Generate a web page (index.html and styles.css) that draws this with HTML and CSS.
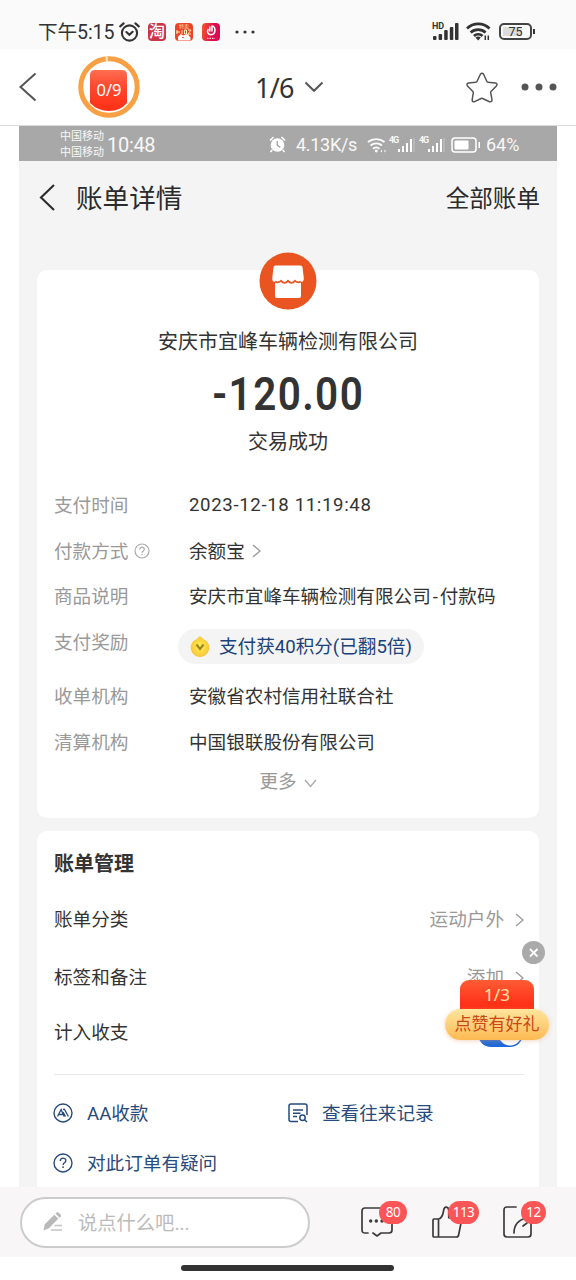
FILE: index.html
```html
<!DOCTYPE html>
<html lang="zh-CN">
<head>
<meta charset="utf-8">
<title>账单详情</title>
<link rel="stylesheet" href="styles.css">
</head>
<body>
<div class="phone">
  <header class="status">
    <span class="status-time">下午5:15</span>
    <svg class="status-alarm" width="21" height="20" viewBox="0 0 21 20" fill="none" stroke="#333" stroke-width="2.1" stroke-linecap="round"><circle cx="10.5" cy="11" r="7.6"/><path d="M7.4 10l3 2.8 3.2-3M1.2 4.4l3.4-3M19.8 4.400l-3.400-3"/></svg>
    <span class="app app-tao">淘</span>
    <span class="app app-sale"><span class="app-tiny">特卖</span>
      <svg width="18" height="12" viewBox="0 0 18 12"><path d="M2 1v4M1 3h4M7 1v4M9.500 1h2v4h-2zM13 1h3l-3 4h3" stroke="#ffe9b0" fill="none"/><path d="M3 11.500V8l2.500-3 3 1.500 4-1.500 3 3.500v3z" fill="#fff"/><circle cx="8" cy="8.500" r=".8" fill="#a43"/></svg></span>
    <span class="app app-live"><svg width="18" height="18" viewBox="0 0 18 18" fill="none" stroke="#fff" stroke-width="1.500" stroke-linecap="round"><path d="M6 6.500c-1.200 3 .2 5.200 3 5.200s4.300-2 3.900-5.500c-.1-1.500-.9-2.500-1.900-3M7.800 4v4M10 3v5"/><path d="M5 15.300h8" stroke-width="1" stroke-dasharray="1.500 1" stroke-linecap="butt"/></svg></span>
    <svg class="status-dots" width="20" height="4" viewBox="0 0 20 4" fill="#333"><circle cx="2" cy="2" r="1.600"/><circle cx="10" cy="2" r="1.600"/><circle cx="18" cy="2" r="1.600"/></svg>
    <span class="signal"><span class="signal-hd">HD</span>
      <svg width="26" height="17" viewBox="0 0 26 17" fill="#333"><rect y="13" width="3.500" height="4" rx="1"/><rect x="5.600" y="11" width="3.500" height="6" rx="1"/><rect x="11.200" y="7" width="3.500" height="10" rx="1"/><rect x="16.800" y="4" width="3.500" height="13" rx="1"/><rect x="22" y="0" width="3.500" height="17" rx="1"/></svg></span>
    <svg class="status-wifi" width="25" height="19" viewBox="0 0 25 19" fill="none" stroke="#333" stroke-width="2.700"><path d="M1 6.500a16 16 0 0 1 22.500 0M4.600 10.500a11 11 0 0 1 15 0M8 14a6 6 0 0 1 8.500 0"/><path d="M9.500 15.500l2.700 3 2.600-3q-2.600-2-5.300 0z" fill="#333" stroke="none"/><path d="M19.300 13.500v4.500M22.300 13.500v4.500" stroke-width="1.500"/></svg>
    <span class="battery"><span class="battery-level">75</span></span>
  </header>

  <nav class="nav">
    <svg class="nav-back" width="18" height="30" viewBox="0 0 18 30" fill="none" stroke="#555" stroke-width="2"><path d="M16.500 1.500L1.500 15l15 13.500"/></svg>
    <div class="ring"><svg width="62" height="62" viewBox="0 0 62 62"><defs><linearGradient id="redFade" x2="0" y2="1"><stop stop-color="#ff6e52"/><stop offset=".4" stop-color="#ff492f"/><stop offset="1" stop-color="#fe2f15"/></linearGradient></defs><circle cx="31" cy="31" r="28.200" fill="none" stroke="#f8a043" stroke-width="5"/><path d="M28.500.5l.4 5" stroke="#fbe6ce" stroke-width="2"/><path d="M12 19q0-5 5-5h27q5 0 5 5v28q-7 8-18 8t-19-8z" fill="url(#redFade)"/></svg><span class="ring-count">0/9</span></div>
    <div class="nav-page">1/6<svg width="20" height="12" viewBox="0 0 20 12" fill="none" stroke="#555" stroke-width="2"><path d="M1.500 1.500l8.500 8.300 8.500-8.300"/></svg></div>
    <svg class="nav-star" width="32" height="31" viewBox="0 0 32 31" fill="none" stroke="#555" stroke-width="1.500" stroke-linejoin="round"><path d="M14.400 2.300Q16 .1 17.600 2.300l3.300 7.200q.3.700 1.100.8l7.300.8q2.700.5 1.100 2.800l-5.400 5.600q-.4.500-.3 1.200l1.300 7q.1 2.600-2.400 2l-7-3.200q-.7-.3-1.400 0l-6.600 3.200q-2.600.4-2.400-2l1.100-7q.1-.7-.4-1.200L1.500 13.900Q0 11.700 2.600 11.100l7.300-.8q.8-.1 1.100-.8z"/></svg>
    <svg class="nav-more" width="36" height="8" viewBox="0 0 36 8" fill="#555"><circle cx="4" cy="4" r="3.500"/><circle cx="18" cy="4" r="3.500"/><circle cx="32" cy="4" r="3.500"/></svg>
  </nav>

  <main class="shot">
    <div class="inner-status">
      <div class="carriers"><span>中国移动</span><span>中国移动</span></div>
      <span class="inner-time">10:48</span>
      <svg class="inner-alarm" width="17" height="17" viewBox="0 0 17 17"><circle cx="8.500" cy="9" r="6.800" fill="#fff"/><path d="M1 4.500L4.500 1M16 4.500L12.500 1M3.200 14L1.500 16M13.800 14l1.700 2" stroke="#fff" stroke-width="1.600"/><path d="M8.300 5v4.400l3 2" fill="none" stroke="#a8a8a8" stroke-width="1.400"/></svg>
      <span class="speed">4.13K/s</span>
      <svg class="inner-wifi" width="20" height="16" viewBox="0 0 20 16" fill="none" stroke="#fff" stroke-width="1.800"><path d="M1 5a13 13 0 0 1 16.500 0M3.500 8.500a9 9 0 0 1 11.500 0M6 11.700a5 5 0 0 1 6.500 0"/><circle cx="9.300" cy="14" r="1.400" fill="#fff" stroke="none"/><path d="M13.500 14l1.500-1.500v3zM19 14l-1.500-1.500v3z" fill="#fff" stroke="none"/></svg>
      <span class="cell"><b>4G</b><svg width="17" height="14" viewBox="0 0 17 14" fill="#fff"><rect y="11" width="2" height="3"/><rect x="4" y="8" width="2" height="6"/><rect x="8" y="5" width="2" height="9"/><rect x="12" y="1" width="2" height="13"/><rect x="15.500" y="0" width="1" height="14" opacity=".35"/></svg></span>
      <span class="cell"><b>4G</b><svg width="17" height="14" viewBox="0 0 17 14" fill="#fff"><rect y="11" width="2" height="3"/><rect x="4" y="8" width="2" height="6"/><rect x="8" y="5" width="2" height="9"/><rect x="12" y="1" width="2" height="13"/><rect x="15.500" y="0" width="1" height="14" opacity=".35"/></svg></span>
      <svg class="inner-battery" width="30" height="16" viewBox="0 0 30 16"><rect x="1" y="1" width="24" height="14" rx="3" fill="none" stroke="#fff" stroke-width="1.500"/><rect x="3.500" y="3.500" width="14" height="9" rx="1" fill="#fff"/><rect x="27.500" y="5" width="1.500" height="6" fill="#fff"/></svg>
      <span class="percent">64%</span>
    </div>

    <div class="bill-head">
      <svg width="16" height="27" viewBox="0 0 16 27" fill="none" stroke="#2b2b2b" stroke-width="2.100"><path d="M15 1L2 13.500 15 26"/></svg>
      <h1 class="bill-title">账单详情</h1>
      <span class="bill-all">全部账单</span>
    </div>

    <section class="card summary">
      <svg class="shop" width="58" height="58" viewBox="0 0 58 58"><circle cx="29" cy="29" r="28.500" fill="#e95420"/><path d="M16.500 13.500h25q1.500 0 2 1.500l1.300 11q.3 4-3 4H16.200q-3.300 0-2.900-4l1.200-11q.4-1.500 2-1.500z" fill="#fff"/><path d="M16 28h26v16q0 2-2 2H18q-2 0-2-2z" fill="#fff"/><path d="M16 29.500q3 2 6-.7 3.500 4 7 0 3.500 4 7 0 3 2.700 6 .7" fill="none" stroke="#e95420" stroke-width="1.800"/></svg>
      <p class="merchant">安庆市宜峰车辆检测有限公司</p>
      <p class="amount">-120.00</p>
      <p class="result">交易成功</p>
      <dl class="facts">
        <div class="fact"><dt>支付时间</dt><dd class="date">2023-12-18 11:19:48</dd></div>
        <div class="fact"><dt>付款方式<svg class="help" width="16" height="16" viewBox="0 0 16 16" fill="none" stroke="#aaa" stroke-width="1.200"><circle cx="8" cy="8" r="7"/><path d="M5.800 6.500c0-3.200 4.600-3 4.500-.2 0 1.700-2.200 1.600-2.200 3.400M8.100 10.700v1.500"/></svg></dt><dd>余额宝<svg class="chev" width="9" height="14" viewBox="0 0 9 14" fill="none" stroke="#999" stroke-width="1.300"><path d="M1 1l7 6-7 6"/></svg></dd></div>
        <div class="fact fact-goods"><dt>商品说明</dt><dd>安庆市宜峰车辆检测有限公司<span class="dash">-</span>付款码</dd></div>
        <div class="fact fact-reward"><dt>支付奖励</dt><dd><span class="pill"><svg width="20" height="21" viewBox="0 0 20 21"><defs><radialGradient id="coin"><stop stop-color="#fff15a"/><stop offset=".6" stop-color="#fbd83f"/><stop offset="1" stop-color="#f6c545"/></radialGradient></defs><path d="M10 .5q1 0 1.800 1l1.500 1.400a9.300 9.300 0 1 1-6.600 0L8.200 1.500Q9 .5 10 .5z" fill="url(#coin)"/><path d="M6.500 8.500l3.500 4.500 3.500-4.500" fill="none" stroke="#9c8424" stroke-width="2.100"/></svg><span class="pill-text">支付获40积分(已翻5倍)</span></span></dd></div>
        <div class="fact"><dt>收单机构</dt><dd>安徽省农村信用社联合社</dd></div>
        <div class="fact"><dt>清算机构</dt><dd>中国银联股份有限公司</dd></div>
      </dl>
      <div class="more">更多<svg width="13" height="9" viewBox="0 0 13 9" fill="none" stroke="#aaa" stroke-width="1.300"><path d="M1 1l5.500 6.500L12 1"/></svg></div>
    </section>

    <section class="card manage">
      <h2 class="manage-title">账单管理</h2>
      <div class="option"><span>账单分类</span><span class="option-value">运动户外<svg width="9" height="14" viewBox="0 0 9 14" fill="none" stroke="#999" stroke-width="1.300"><path d="M1 1l7 6-7 6"/></svg></span></div>
      <div class="option"><span>标签和备注</span><span class="option-value">添加<svg width="9" height="14" viewBox="0 0 9 14" fill="none" stroke="#999" stroke-width="1.300"><path d="M1 1l7 6-7 6"/></svg></span></div>
      <div class="option option-last"><span>计入收支</span><span class="toggle"></span></div>
      <div class="links">
        <span class="link"><svg width="20" height="20" viewBox="0 0 20 20" fill="none" stroke="#274b7c" stroke-width="1.400"><circle cx="10" cy="10" r="9"/><path d="M4.500 13.500l3.600-7 3 7M6 11.500h3.500M10 6.500l1.400-.3 4 7.300M10 9l2.500 4.500" stroke-width="1.300"/></svg><span>AA收款</span></span>
        <span class="link"><svg width="20" height="20" viewBox="0 0 20 20" fill="none" stroke="#274b7c" stroke-width="1.500"><path d="M10 18.500H3q-2 0-2-2V3q0-2 2-2h14q2 0 2 2v9M5 7h10M5 10.200h7.500M5 13.400h4"/><circle cx="14.500" cy="14.700" r="2.700"/><path d="M16.500 16.700l2.500 2.300"/></svg><span>查看往来记录</span></span>
        <span class="link"><svg width="20" height="20" viewBox="0 0 20 20" fill="none" stroke="#274b7c" stroke-width="1.400"><circle cx="10" cy="10" r="9"/><path d="M7.300 8c0-4 5.600-3.700 5.500-.3 0 2.200-2.700 2-2.700 4.200M10.100 13.300v1.700"/></svg><span>对此订单有疑问</span></span>
      </div>
    </section>
  </main>

  <aside class="promo">
    <svg class="promo-close" width="23" height="23" viewBox="0 0 23 23"><circle cx="11.500" cy="11.500" r="11.500" fill="#aaa"/><path d="M8 8l7.500 7.500M15.500 8L8 15.500" stroke="#fff" stroke-width="1.800"/></svg>
    <span class="promo-step">1/3</span>
    <span class="promo-label">点赞有好礼</span>
  </aside>

  <footer class="bar">
    <div class="comment"><svg width="20" height="20" viewBox="0 0 20 20"><path d="M.5 18.500l1.300-6.300L11.300 2.700l4 4-9.400 9.500zM12.500 1.500l1-.9q1.200-.8 2.200.2l1.800 1.800q1 1.200.1 2.200l-1 1z" fill="#b9b9b9"/><path d="M11.500 13.500H19M8 18h11" stroke="#c4c4c4" stroke-width="1.300"/></svg><span class="comment-hint">说点什么吧...</span></div>
    <div class="action"><svg width="32" height="32" viewBox="0 0 32 32" fill="none" stroke="#3c3c3c" stroke-width="1.700" stroke-linecap="round" stroke-linejoin="round"><path d="M7 27H4q-3 0-3-3V5q0-3 3-3h24q3 0 3 3v19q0 3-3 3h-8l-4 3-4-3"/><g fill="#3c3c3c" stroke="none"><circle cx="9.700" cy="15" r="1.700"/><circle cx="15.300" cy="15" r="1.700"/><circle cx="21" cy="15" r="1.700"/></g></svg><span class="badge">80</span></div>
    <div class="action action-like"><svg width="32" height="32" viewBox="0 0 32 32" fill="none" stroke="#3c3c3c" stroke-width="1.700" stroke-linejoin="round"><path d="M1 14q0-1 1-1h4.500c4-1 4.500-5 5.200-9 .8-4.500 5-3.500 5 .5v6.500q0 1 1 1H28q2 0 1.600 2l-3 15q-.3 2-2.300 2H2q-1 0-1-1zM6.500 13v18"/></svg><span class="badge">113</span></div>
    <div class="action action-share"><svg width="32" height="32" viewBox="0 0 32 32" fill="none" stroke="#3c3c3c" stroke-width="1.700" stroke-linecap="round"><path d="M13 1H4Q1 1 1 4v24q0 3 3 3h21q3 0 3-3V15M11 27c0-7 3-13 13-15M20 20l4-3"/></svg><span class="badge">12</span></div>
  </footer>
  <div class="home"><span class="home-line"></span></div>
</div>
</body>
</html>
```
FILE: styles.css
```css
* { box-sizing: border-box; }
body, h1, h2, p, dl, dd { margin: 0; }
body { background: #fff; color: #333; font-family: Roboto, "Noto Sans CJK SC", sans-serif; font-size: 18.6px; line-height: 1.2; }
svg { display: block; flex: none; }
.phone { width: 576px; height: 1280px; display: flex; flex-direction: column; position: relative; overflow: hidden; white-space: nowrap; }

.status { height: 49px; flex: none; display: flex; align-items: center; padding: 14px 38px 0; background: #fafafa; }
.status-time { width: 76px; padding-top: 2px; font-size: 19.6px; letter-spacing: -0.1px; }
.status-alarm { margin-left: 5px; }
.app { width: 18px; height: 18px; margin-left: 8px; border-radius: 4px; overflow: hidden; color: #fff; flex: none; }
.app-tao { background: #cb3549; font-size: 16px; line-height: 18px; font-weight: 500; text-align: center; }
.app-sale { background: #ed432b; margin-left: 9px; }
.app-tiny { display: block; font-size: 5px; line-height: 6px; text-align: center; color: #ffe9b0; }
.app-live { background: linear-gradient(100deg, #f35a25, #dd0c52 60%); margin-left: 9px; }
.status-dots { margin-left: 15px; }
.signal { position: relative; margin-left: auto; height: 17px; width: 26px; }
.signal-hd { position: absolute; left: -1px; top: -1px; font-size: 9px; line-height: 8px; font-weight: 700; }
.status-wifi { margin-left: 7px; }
.battery { position: relative; width: 33px; height: 17px; margin-left: 8px; margin-right: 6px; border: 2px solid #444; border-radius: 5px; padding: 2px; display: flex; }
.battery::after { content: ""; position: absolute; right: -5px; top: 4px; width: 2px; height: 5px; background: #333; }
.battery-level { flex: 1; background: linear-gradient(90deg, #dcdcdc 75%, #fafafa 75%); font-size: 12.5px; line-height: 10px; text-align: center; }

.nav { height: 77px; flex: none; display: flex; align-items: center; padding: 0 19px 0 19px; border-bottom: 1px solid #dcdcdc; }
.ring { position: relative; margin-left: 41px; }
.ring-count { position: absolute; inset: 6px 0 0; display: flex; align-items: center; justify-content: center; color: #fff; font-size: 16.5px; font-family: "Noto Sans", sans-serif; }
.nav-page { display: flex; align-items: center; gap: 10px; margin-left: 115px; font: 27px "Noto Sans", sans-serif; letter-spacing: -0.8px; }
.nav-star { margin-left: auto; }
.nav-more { margin-left: 23px; }

.shot { width: 538px; height: 1061px; flex: none; margin-left: 19px; background: #f4f4f4; display: flex; flex-direction: column; overflow: hidden; }
.inner-status { height: 35px; flex: none; display: flex; align-items: center; padding: 2px 37px 0 41px; background: #a8a8a8; color: #f8f8f8; }
.carriers { display: flex; flex-direction: column; width: 44px; padding-top: 1px; font-size: 11px; line-height: 16px; }
.inner-time { margin-left: 3px; font-size: 20px; letter-spacing: -0.3px; }
.inner-alarm { margin-left: auto; }
.speed { margin-left: 10px; width: 61px; font-size: 18px; letter-spacing: -0.3px; }
.inner-wifi { margin-left: 10px; }
.cell { display: flex; align-items: center; margin-left: 2px; }
.cell b { font-size: 9px; line-height: 8px; padding-bottom: 9px; width: 9px; letter-spacing: -1.2px; }
.cell + .cell { margin-left: 4px; }
.inner-battery { margin-left: 6px; }
.percent { margin-left: 5px; width: 34px; font-size: 18px; }

.bill-head { height: 109px; flex: none; display: flex; align-items: center; padding: 0 17px 37px 20px; color: #2b2b2b; }
.bill-title { margin-left: 21px; padding-top: 3px; font-size: 26.6px; font-weight: 400; }
.bill-all { margin-left: auto; padding-top: 4px; font-size: 23.6px; }

.card { width: 502px; flex: none; margin-left: 18px; border-radius: 10px; background: #fff; }
.summary { height: 548px; display: flex; flex-direction: column; align-items: center; }
.shop { margin-top: -18px; }
.merchant { margin-top: 17px; height: 30px; line-height: 30px; font-size: 20px; }
.amount { height: 52px; margin-top: 11px; line-height: 52px; font-size: 46px; font-weight: 600; letter-spacing: 1.6px; transform: scaleX(0.88); }
.result { height: 30px; margin-top: 7px; line-height: 30px; font-size: 20px; }
.facts { align-self: stretch; margin-top: 25px; padding: 0 17px; }
.fact { display: flex; align-items: center; height: 46px; }
.fact dt { width: 134px; display: flex; align-items: center; padding-top: 2px; color: #999; }
.fact dd { display: flex; align-items: center; padding: 2px 0 0 1px; }
.fact .date { padding-top: 0; letter-spacing: 0.65px; }
.help { margin: -2px 0 0 6px; }
.chev { margin: -2px 0 0 7px; }
.dash { width: 9px; text-align: center; }
.fact-goods { height: 45px; }
.fact-reward { height: 54px; }
.fact-reward dt { padding-bottom: 8px; }
.fact-reward dd { padding-top: 0; }
.pill { display: flex; align-items: center; height: 35px; margin-left: -11px; padding: 0 12px; border-radius: 18px; background: #f4f4f4; color: #1b427a; }
.pill svg { margin-right: 9px; }
.pill-text { padding-top: 3px; }
.more { height: 34px; display: flex; align-items: center; gap: 7px; padding-top: 1px; color: #999; }
.more svg { margin-top: 2px; }

.manage { height: 368px; margin-top: 13px; padding: 12px 15px 0 17px; }
.manage-title { height: 47px; line-height: 42px; font-size: 20px; font-weight: 700; }
.option { height: 58px; display: flex; align-items: center; justify-content: space-between; padding-top: 2px; }
.option-value { display: flex; align-items: center; gap: 11px; color: #999; }
.option-last { height: 69px; padding: 2px 0 15px; border-bottom: 1px solid #e8e8e8; }
.toggle { width: 45px; height: 26px; margin-right: 1px; border-radius: 13px; background: radial-gradient(circle at 32px 13px, #fff 11px, #1e69d8 12px); }
.links { display: grid; grid-template-columns: 235px 1fr; grid-auto-rows: 50px; padding-top: 13px; margin-left: -1px; color: #274b7c; }
.link { display: flex; align-items: center; gap: 14px; }
.link span { padding-top: 2px; }

.promo { position: absolute; left: 445px; top: 941px; width: 104px; height: 99px; }
.promo-close { position: absolute; right: 4px; top: 0; }
.promo-step { position: absolute; left: 15px; top: 39px; width: 74px; height: 36px; border-radius: 9px 9px 0 0; background: linear-gradient(#ff5c36, #ff3218 65%); color: #ffe7a5; font-family: "Noto Sans", sans-serif; font-size: 17px; line-height: 29px; text-align: center; }
.promo-label { position: absolute; left: 0; bottom: 0; width: 104px; height: 31px; border-radius: 16px; background: linear-gradient(#ffe59c, #ffd07a 50%, #fcb951); box-shadow: 0 1px 4px #e7a06a70; color: #c94719; font-size: 17px; line-height: 31px; text-align: center; }

.bar { height: 70px; flex: none; display: flex; align-items: center; padding-left: 20px; background: #f8f6f7; }
.comment { width: 290px; height: 51px; display: flex; align-items: center; gap: 15px; padding-left: 21px; border: 2px solid #ccc; border-radius: 26px; background: #fff; color: #bbb; font-size: 19.3px; }
.comment-hint { padding-top: 3px; }
.action { position: relative; margin-left: 51px; }
.action-like, .action-share { margin-left: 39px; }
.badge { position: absolute; left: 18px; top: -5px; min-width: 28px; height: 23px; padding: 0 6px; border-radius: 12px; background: #fb5557; color: #fff; font: 13.5px/23px "Noto Sans", sans-serif; text-align: center; letter-spacing: -0.5px; }
.action-like .badge { left: 16px; width: 31px; padding: 0; }
.action-share .badge { width: 25px; min-width: 25px; padding: 0; }
.home { height: 23px; padding: 8px 1px 0 0; display: flex; justify-content: center; }
.home-line { width: 213px; height: 6px; border-radius: 3px; background: #333; }
```
